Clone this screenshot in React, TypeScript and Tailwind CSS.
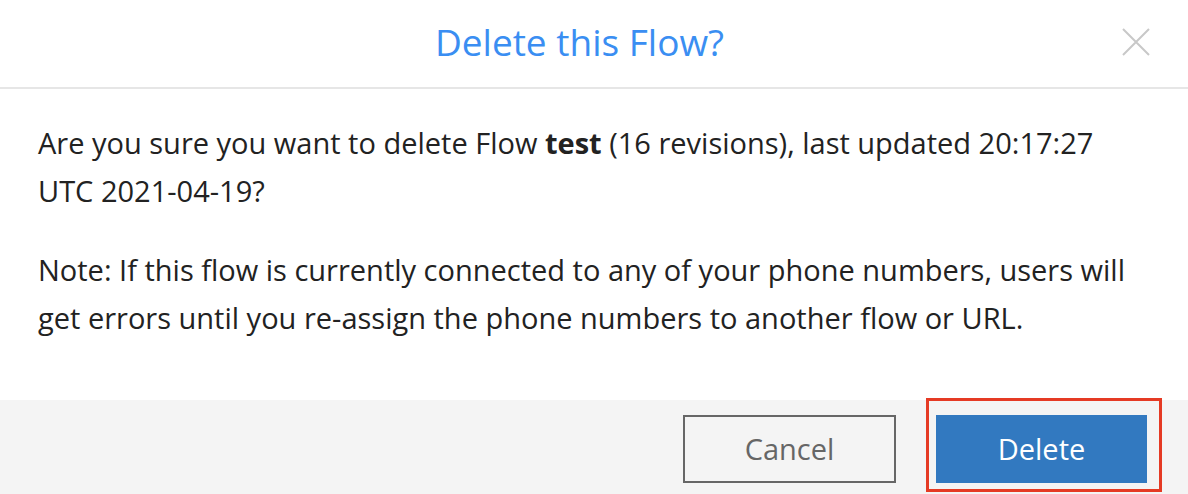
export default function App() {
  return (
    <div
      className="w-[1188px] h-[494px] bg-white flex flex-col overflow-hidden text-[#222]"
      style={{ fontFamily: '"Open Sans", "Noto Sans", sans-serif' }}
    >
      <header className="h-[89px] shrink-0 flex items-center border-b-2 border-[#e6e6e6]">
        <h1 className="flex-1 pl-[38px] text-center text-[37px] text-[#3a8ef2] leading-none pb-[4px]">
          Delete this Flow?
        </h1>
        <button className="w-[30px] h-[30px] mr-[37px] mb-[4px] flex items-center justify-center">
          <svg width="30" height="30" viewBox="0 0 30 30" fill="none" stroke="#c8c8c8" strokeWidth="2">
            <path d="M2 2 L28 28 M28 2 L2 28" />
          </svg>
        </button>
      </header>

      <main className="flex-1 pl-[38px] pr-[46px] pt-[30px] text-[29px] leading-[48px]">
        <p>
          Are you sure you want to delete Flow <strong className="font-bold">test</strong> (16 revisions), last updated 20:17:27 UTC 2021-04-19?
        </p>
        <p className="mt-[31px]">
          Note: If this flow is currently connected to any of your phone numbers, users will get errors until you re-assign the phone numbers to another flow or URL.
        </p>
      </main>

      <footer className="h-[94px] shrink-0 bg-[#f4f4f4] flex items-start justify-end gap-[40px] pt-[15px] pr-[41px]">
        <button className="w-[213px] h-[68px] border-2 border-[#666] text-[#666] text-[29px] bg-transparent">
          Cancel
        </button>
        <div className="relative">
          <button className="w-[211px] h-[68px] bg-[#3279c0] text-white text-[29px]">
            Delete
          </button>
          <div className="absolute left-[-10px] right-[-15px] top-[-17px] bottom-[-9px] border-[3px] border-[#e53a24] pointer-events-none" />
        </div>
      </footer>
    </div>
  )
}
